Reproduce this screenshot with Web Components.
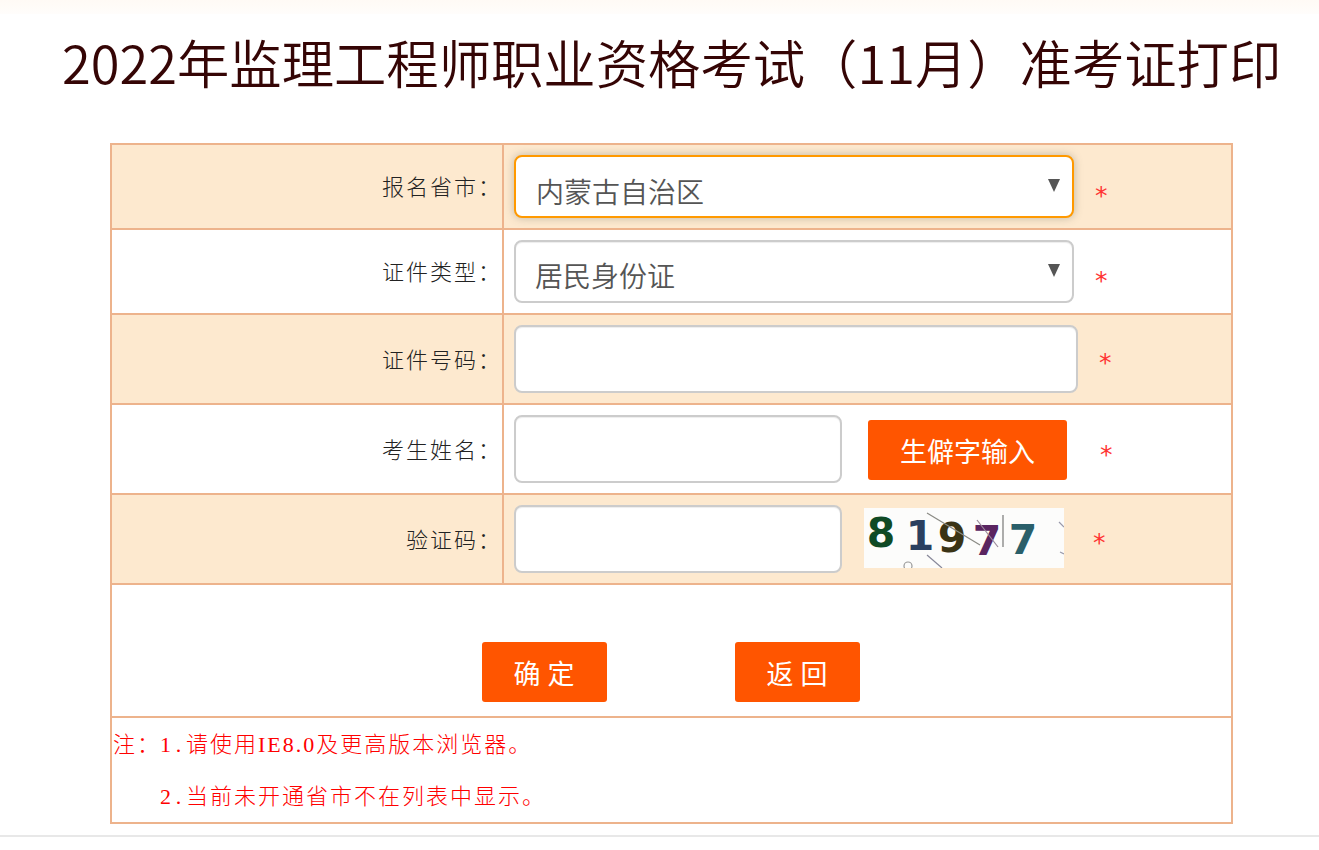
<!DOCTYPE html>
<html lang="zh-CN">
<head>
<meta charset="utf-8">
<title>准考证打印</title>
<style>
    html, body { margin: 0; padding: 0; background: #fff; }
    body { font-family: "Noto Sans CJK SC", "Liberation Sans", sans-serif; }
    note-row i { font-style: normal; letter-spacing: 2px; }
    note-row b { font-weight: inherit; letter-spacing: 4.75px; }
</style>
</head>
<body>
<exam-page>
    <span slot="title">2022年监理工程师职业资格考试（11月）准考证打印</span>
    <form-row label="报名省市：" shaded height="85">
        <exam-select focused pad="20">内蒙古自治区</exam-select>
        <req-mark style="margin-left:20px; margin-top:19px"></req-mark>
    </form-row>
    <form-row label="证件类型：" height="85">
        <exam-select pad="19">居民身份证</exam-select>
        <req-mark style="margin-left:20px; margin-top:19px"></req-mark>
    </form-row>
    <form-row label="证件号码：" shaded height="90">
        <exam-input style="width:564px"></exam-input>
        <req-mark style="margin-left:20px; margin-top:16px"></req-mark>
    </form-row>
    <form-row label="考生姓名：" height="90">
        <exam-input style="width:328px"></exam-input>
        <exam-button style="width:199px; margin-left:26px; margin-top:5px">生僻字输入</exam-button>
        <req-mark style="margin-left:32px; margin-top:18px"></req-mark>
    </form-row>
    <form-row label="验证码：" shaded height="90">
        <exam-input style="width:328px"></exam-input>
        <captcha-image style="margin-left:22px; margin-top:3px"></captcha-image>
        <req-mark style="margin-left:28px; margin-top:16px"></req-mark>
    </form-row>
    <action-row>
        <exam-button style="width:125px" spaced>确定</exam-button>
        <exam-button style="width:125px" spaced>返回</exam-button>
    </action-row>
    <note-row>
        <span><b>1.</b>请使用<i>IE8.0</i>及更高版本浏览器。</span>
        <span><b>2.</b>当前未开通省市不在列表中显示。</span>
    </note-row>
</exam-page>

<script>
    class ExamPage extends HTMLElement {
        constructor() {
            super();
            this.attachShadow({ mode: "open" }).innerHTML = `<style>
                :host { display: block; height: 850px; box-sizing: border-box; overflow: hidden; }
                .strip { height: 14px; background: linear-gradient(#fffaf5, #fffdfb); }
                h1 {
                    margin: 0;
                    height: 129px;
                    padding: 16px 0 0 62px;
                    box-sizing: border-box;
                    color: #350505;
                    font-size: 52.35px;
                    font-weight: 350;
                    line-height: 62px;
                    white-space: nowrap;
                }
                .form {
                    width: 1123px;
                    margin-left: 110px;
                    box-sizing: border-box;
                    border: 2px solid #edb38c;
                    border-bottom-width: 0;
                }
                .foot { margin-top: 11px; border-top: 2px solid #e8e8e8; }
            </style>
            <div class="strip"></div>
            <h1><slot name="title"></slot></h1>
            <div class="form"><slot></slot></div>
            <div class="foot"></div>`;
        }
    }

    class FormRow extends HTMLElement {
        constructor() {
            super();
            this.attachShadow({ mode: "open" }).innerHTML = `<style>
                :host {
                    display: grid;
                    grid-template-columns: 390px 2px 1fr;
                    box-sizing: border-box;
                    border-bottom: 2px solid #edb38c;
                }
                :host([shaded]) { background: #fde9cf; }
                .label {
                    display: flex;
                    align-items: center;
                    justify-content: flex-end;
                    padding-bottom: 3px;
                    color: #222;
                    font-size: 22px;
                    letter-spacing: 2px;
                    font-weight: 300;
                }
                .line { background: #edb38c; }
                .field { display: flex; align-items: flex-start; padding: 10px 0 0 10px; }
            </style>
            <div class="label"></div>
            <div class="line"></div>
            <div class="field"><slot></slot></div>`;
        }

        connectedCallback() {
            this.shadowRoot.querySelector(".label").textContent = this.getAttribute("label");
            this.style.height = this.getAttribute("height") + "px";
        }
    }

    class ExamSelect extends HTMLElement {
        constructor() {
            super();
            this.attachShadow({ mode: "open" }).innerHTML = `<style>
                :host {
                    display: block;
                    width: 560px;
                    height: 63px;
                    box-sizing: border-box;
                    position: relative;
                    background: #fff;
                    border: 2px solid #ccc;
                    border-radius: 8px;
                    box-shadow: inset 0 1px 1px rgba(0, 0, 0, .075);
                    color: #555;
                    font-size: 28px;
                    font-weight: 350;
                }
                :host([focused]) {
                    border-color: #f90;
                    box-shadow: 0 0 8px rgba(80, 90, 80, .35);
                }
                .value { display: block; line-height: 40px; padding-top: 13px; white-space: nowrap; }
                :host([focused]) .value { padding-top: 14px; }
                svg { position: absolute; right: 12px; top: 22px; }
            </style>
            <span class="value"><slot></slot></span>
            <svg width="12" height="13" viewBox="0 0 12 13"><path d="M0 0H12L6 13Z" fill="#555"/></svg>`;
        }

        connectedCallback() {
            this.shadowRoot.querySelector(".value").style.paddingLeft = this.getAttribute("pad") + "px";
        }
    }

    class ExamInput extends HTMLElement {
        constructor() {
            super();
            this.attachShadow({ mode: "open" }).innerHTML = `<style>
                :host { display: block; height: 68px; }
                input {
                    display: block;
                    width: 100%;
                    height: 100%;
                    box-sizing: border-box;
                    background: #fff;
                    border: 2px solid #ccc;
                    border-radius: 8px;
                    box-shadow: inset 0 1px 1px rgba(0, 0, 0, .075);
                    outline: none;
                }
            </style>
            <input type="text">`;
        }
    }

    class ExamButton extends HTMLElement {
        constructor() {
            super();
            this.attachShadow({ mode: "open" }).innerHTML = `<style>
                :host {
                    display: flex;
                    align-items: center;
                    justify-content: center;
                    height: 60px;
                    background: #f50;
                    border-radius: 3px;
                    color: #fff;
                    font-size: 27px;
                    cursor: pointer;
                }
                :host([spaced]) { letter-spacing: 7px; text-indent: 7px; }
            </style>
            <slot></slot>`;
        }
    }

    class ReqMark extends HTMLElement {
        constructor() {
            super();
            this.attachShadow({ mode: "open" }).innerHTML = `<style>
                :host {
                    display: block;
                    color: #f33;
                    font-family: "DejaVu Sans", sans-serif;
                    font-size: 25px;
                    line-height: 34px;
                    padding: 5px 0 0 1px;
                }
            </style>*`;
        }
    }

    class CaptchaImage extends HTMLElement {
        constructor() {
            super();
            this.attachShadow({ mode: "open" }).innerHTML = `<style>
                :host { display: block; width: 200px; height: 60px; }
                svg { display: block; }
                text { font-family: "DejaVu Sans", sans-serif; font-size: 41px; font-weight: 700; text-anchor: middle; }
                line, circle { fill: none; stroke-width: 1.2; }
            </style>
            <svg width="200" height="60" viewBox="864 508 200 60">
                <rect x="864" y="508" width="200" height="60" fill="#fcfcfb"/>
                <text x="881" y="547" fill="#0f4a25">8</text>
                <text x="920" y="550" fill="#2a3f5f">1</text>
                <text x="952" y="552" fill="#3a3315">9</text>
                <text x="987" y="555" fill="#5a2560">7</text>
                <text x="1023" y="554" fill="#2a5f6a">7</text>
                <line x1="927" y1="513" x2="980" y2="545" stroke="#8a8a84"/>
                <line x1="977" y1="520" x2="998" y2="547" stroke="#9a8a9a"/>
                <line x1="1003" y1="515" x2="1003" y2="547" stroke="#777"/>
                <line x1="927" y1="555" x2="942" y2="568" stroke="#889"/>
                <circle cx="908" cy="566" r="4" stroke="#999"/>
                <line x1="1059" y1="522" x2="1064" y2="527" stroke="#99a"/>
                <line x1="1060" y1="552" x2="1064" y2="554" stroke="#99a"/>
            </svg>`;
        }
    }

    class ActionRow extends HTMLElement {
        constructor() {
            super();
            this.attachShadow({ mode: "open" }).innerHTML = `<style>
                :host {
                    display: flex;
                    justify-content: center;
                    gap: 128px;
                    height: 133px;
                    box-sizing: border-box;
                    padding: 57px 2px 0 0;
                    border-bottom: 2px solid #edb38c;
                }
            </style>
            <slot></slot>`;
        }
    }

    class NoteRow extends HTMLElement {
        constructor() {
            super();
            this.attachShadow({ mode: "open" }).innerHTML = `<style>
                :host {
                    display: grid;
                    grid-template-columns: 47px 1fr;
                    height: 106px;
                    box-sizing: border-box;
                    padding: 1px 0 0 1px;
                    border-bottom: 2px solid #edb38c;
                    color: #f00;
                    font-family: "Liberation Serif", "Noto Sans CJK SC", serif;
                    font-size: 22px;
                    font-weight: 300;
                    letter-spacing: 2px;
                    line-height: 51px;
                }
                .lines { display: grid; }
                ::slotted(span) { display: block; white-space: nowrap; }
            </style>
            <div>注：</div>
            <div class="lines"><slot></slot></div>`;
        }
    }

    customElements.define("exam-page", ExamPage);
    customElements.define("form-row", FormRow);
    customElements.define("exam-select", ExamSelect);
    customElements.define("exam-input", ExamInput);
    customElements.define("exam-button", ExamButton);
    customElements.define("req-mark", ReqMark);
    customElements.define("captcha-image", CaptchaImage);
    customElements.define("action-row", ActionRow);
    customElements.define("note-row", NoteRow);
</script>
</body>
</html>
